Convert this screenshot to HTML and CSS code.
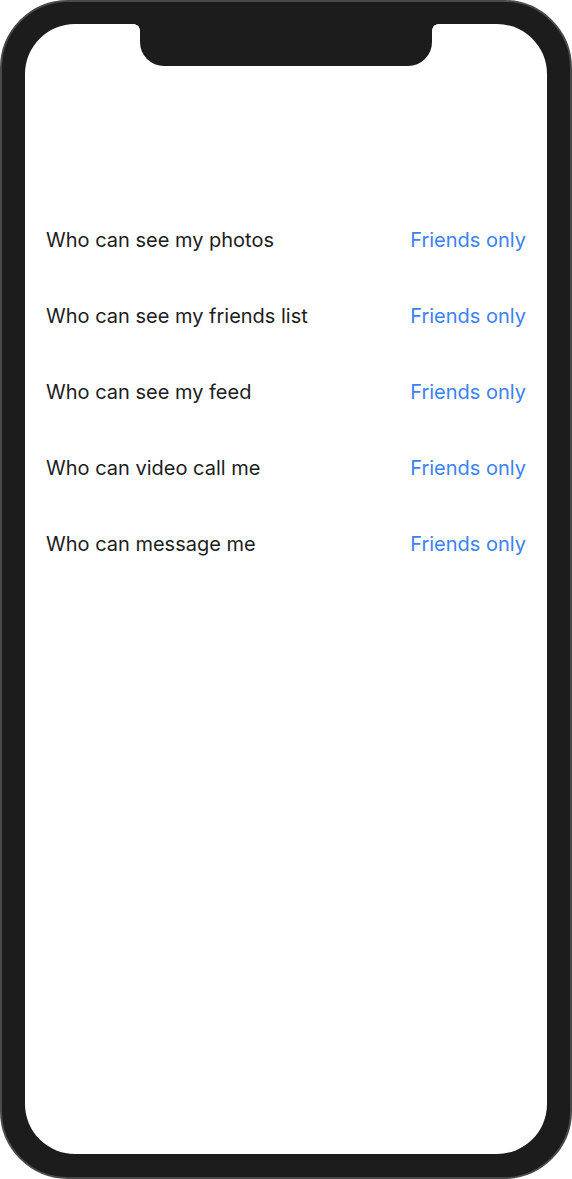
FILE: index.html
```html
<!DOCTYPE html>
<html>
<head>
<meta charset="utf-8">
<link rel="stylesheet" href="styles.css">
</head>
<body>
<div class="phone">
  <div class="screen">
    <div class="notch"></div>
    <ul class="settings">
      <li class="row"><span class="label">Who can see my photos</span><span class="value">Friends only</span></li>
      <li class="row"><span class="label">Who can see my friends list</span><span class="value">Friends only</span></li>
      <li class="row"><span class="label">Who can see my feed</span><span class="value">Friends only</span></li>
      <li class="row"><span class="label">Who can video call me</span><span class="value">Friends only</span></li>
      <li class="row"><span class="label">Who can message me</span><span class="value">Friends only</span></li>
    </ul>
  </div>
</div>
</body>
</html>
```
FILE: styles.css
```css
html, body {
  margin: 0;
  padding: 0;
  background: #ffffff;
}
.phone {
  box-sizing: border-box;
  width: 572px;
  height: 1179px;
  background: #1c1c1c;
  border: 2px solid #4a4a4a;
  border-radius: 68px;
  padding: 22px 23px 23px 23px;
  display: flex;
}
.screen {
  position: relative;
  flex: 1;
  background: #ffffff;
  border-radius: 50px;
  overflow: hidden;
}
.notch {
  position: absolute;
  top: 0;
  left: 115px;
  width: 292px;
  height: 42px;
  background: #1c1c1c;
  border-radius: 0 0 24px 24px;
}
.notch::before, .notch::after {
  content: "";
  position: absolute;
  top: 0;
  width: 12px;
  height: 12px;
  background: radial-gradient(circle at 0 100%, transparent 6px, #1c1c1c 6.5px);
}
.notch::before {
  left: -6px;
  width: 6px;
  height: 6px;
  background: radial-gradient(circle at 0 100%, transparent 5.5px, #1c1c1c 6px);
}
.notch::after {
  right: -6px;
  width: 6px;
  height: 6px;
  background: radial-gradient(circle at 100% 100%, transparent 5.5px, #1c1c1c 6px);
}
.settings {
  list-style: none;
  margin: 0;
  padding: 178px 21px 0 21px;
  display: flex;
  flex-direction: column;
}
.row {
  height: 76px;
  display: flex;
  align-items: center;
  justify-content: space-between;
  font-family: Inter, "Liberation Sans", sans-serif;
  font-size: 20px;
}
.label {
  color: #1c1c1e;
}
.value {
  color: #3b82f6;
}
```
